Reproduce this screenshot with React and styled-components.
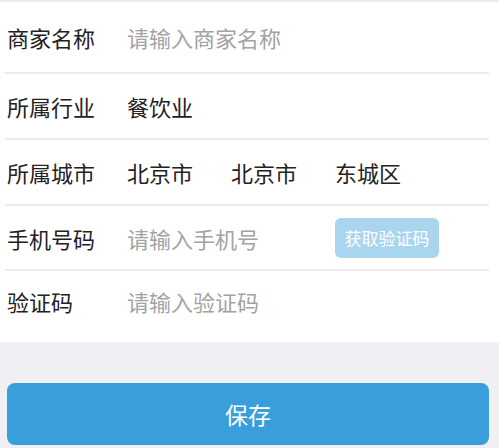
import React from "react";
import styled, { createGlobalStyle } from "styled-components";

const Global = createGlobalStyle`
  html, body { margin: 0; padding: 0; background: #efeff4; }
  body { font-family: "Noto Sans CJK SC", "Noto Sans", sans-serif; }
  * { box-sizing: border-box; }
`;

const Page = styled.div`
  width: 499px;
  height: 448px;
  background: #efeff4;
  overflow: hidden;
`;

const Form = styled.div`
  background: #fff;
  border-top: 2px solid #ececec;
  padding-bottom: 11px;
`;

const Row = styled.div`
  display: flex;
  align-items: center;
  height: ${(p) => p.$h}px;
  margin: 0 10px 0 5px;
  padding-left: 2px;
  border-bottom: ${(p) => (p.$last ? "none" : "2px solid #ececec")};
`;

const Label = styled.div`
  width: 120px;
  flex: none;
  font-size: 22px;
  color: #222;
  line-height: 1;
`;

const Value = styled.div`
  width: ${(p) => p.$w || 104}px;
  flex: none;
  font-size: 22px;
  color: #222;
  line-height: 1;
`;

const Input = styled.input`
  width: ${(p) => p.$w || 300}px;
  flex: none;
  border: none;
  outline: none;
  padding: 0;
  margin: 0;
  font-family: inherit;
  font-size: 22px;
  line-height: 1;
  color: #222;
  background: transparent;
  &::placeholder { color: #a3a3a3; }
`;

const CodeButton = styled.button`
  width: 104px;
  height: 40px;
  border: none;
  border-radius: 6px;
  background: #a9d5ef;
  color: #fff;
  font-family: inherit;
  font-size: 17px;
  padding: 0;
`;

const Footer = styled.div`
  padding: 41px 10px 0 7px;
`;

const SaveButton = styled.button`
  width: 100%;
  height: 62px;
  border: none;
  border-radius: 8px;
  background: #389fda;
  color: #fff;
  font-family: inherit;
  font-size: 23px;
  padding: 0;
`;

export default function App() {
  return (
    <Page>
      <Global />
      <Form>
        <Row $h={72}>
          <Label>商家名称</Label>
          <Input placeholder="请输入商家名称" />
        </Row>
        <Row $h={66}>
          <Label>所属行业</Label>
          <Value>餐饮业</Value>
        </Row>
        <Row $h={66}>
          <Label>所属城市</Label>
          <Value>北京市</Value>
          <Value>北京市</Value>
          <Value>东城区</Value>
        </Row>
        <Row $h={65}>
          <Label>手机号码</Label>
          <Input $w={208} placeholder="请输入手机号" />
          <CodeButton>获取验证码</CodeButton>
        </Row>
        <Row $h={60} $last>
          <Label>验证码</Label>
          <Input placeholder="请输入验证码" />
        </Row>
      </Form>
      <Footer>
        <SaveButton>保存</SaveButton>
      </Footer>
    </Page>
  );
}
